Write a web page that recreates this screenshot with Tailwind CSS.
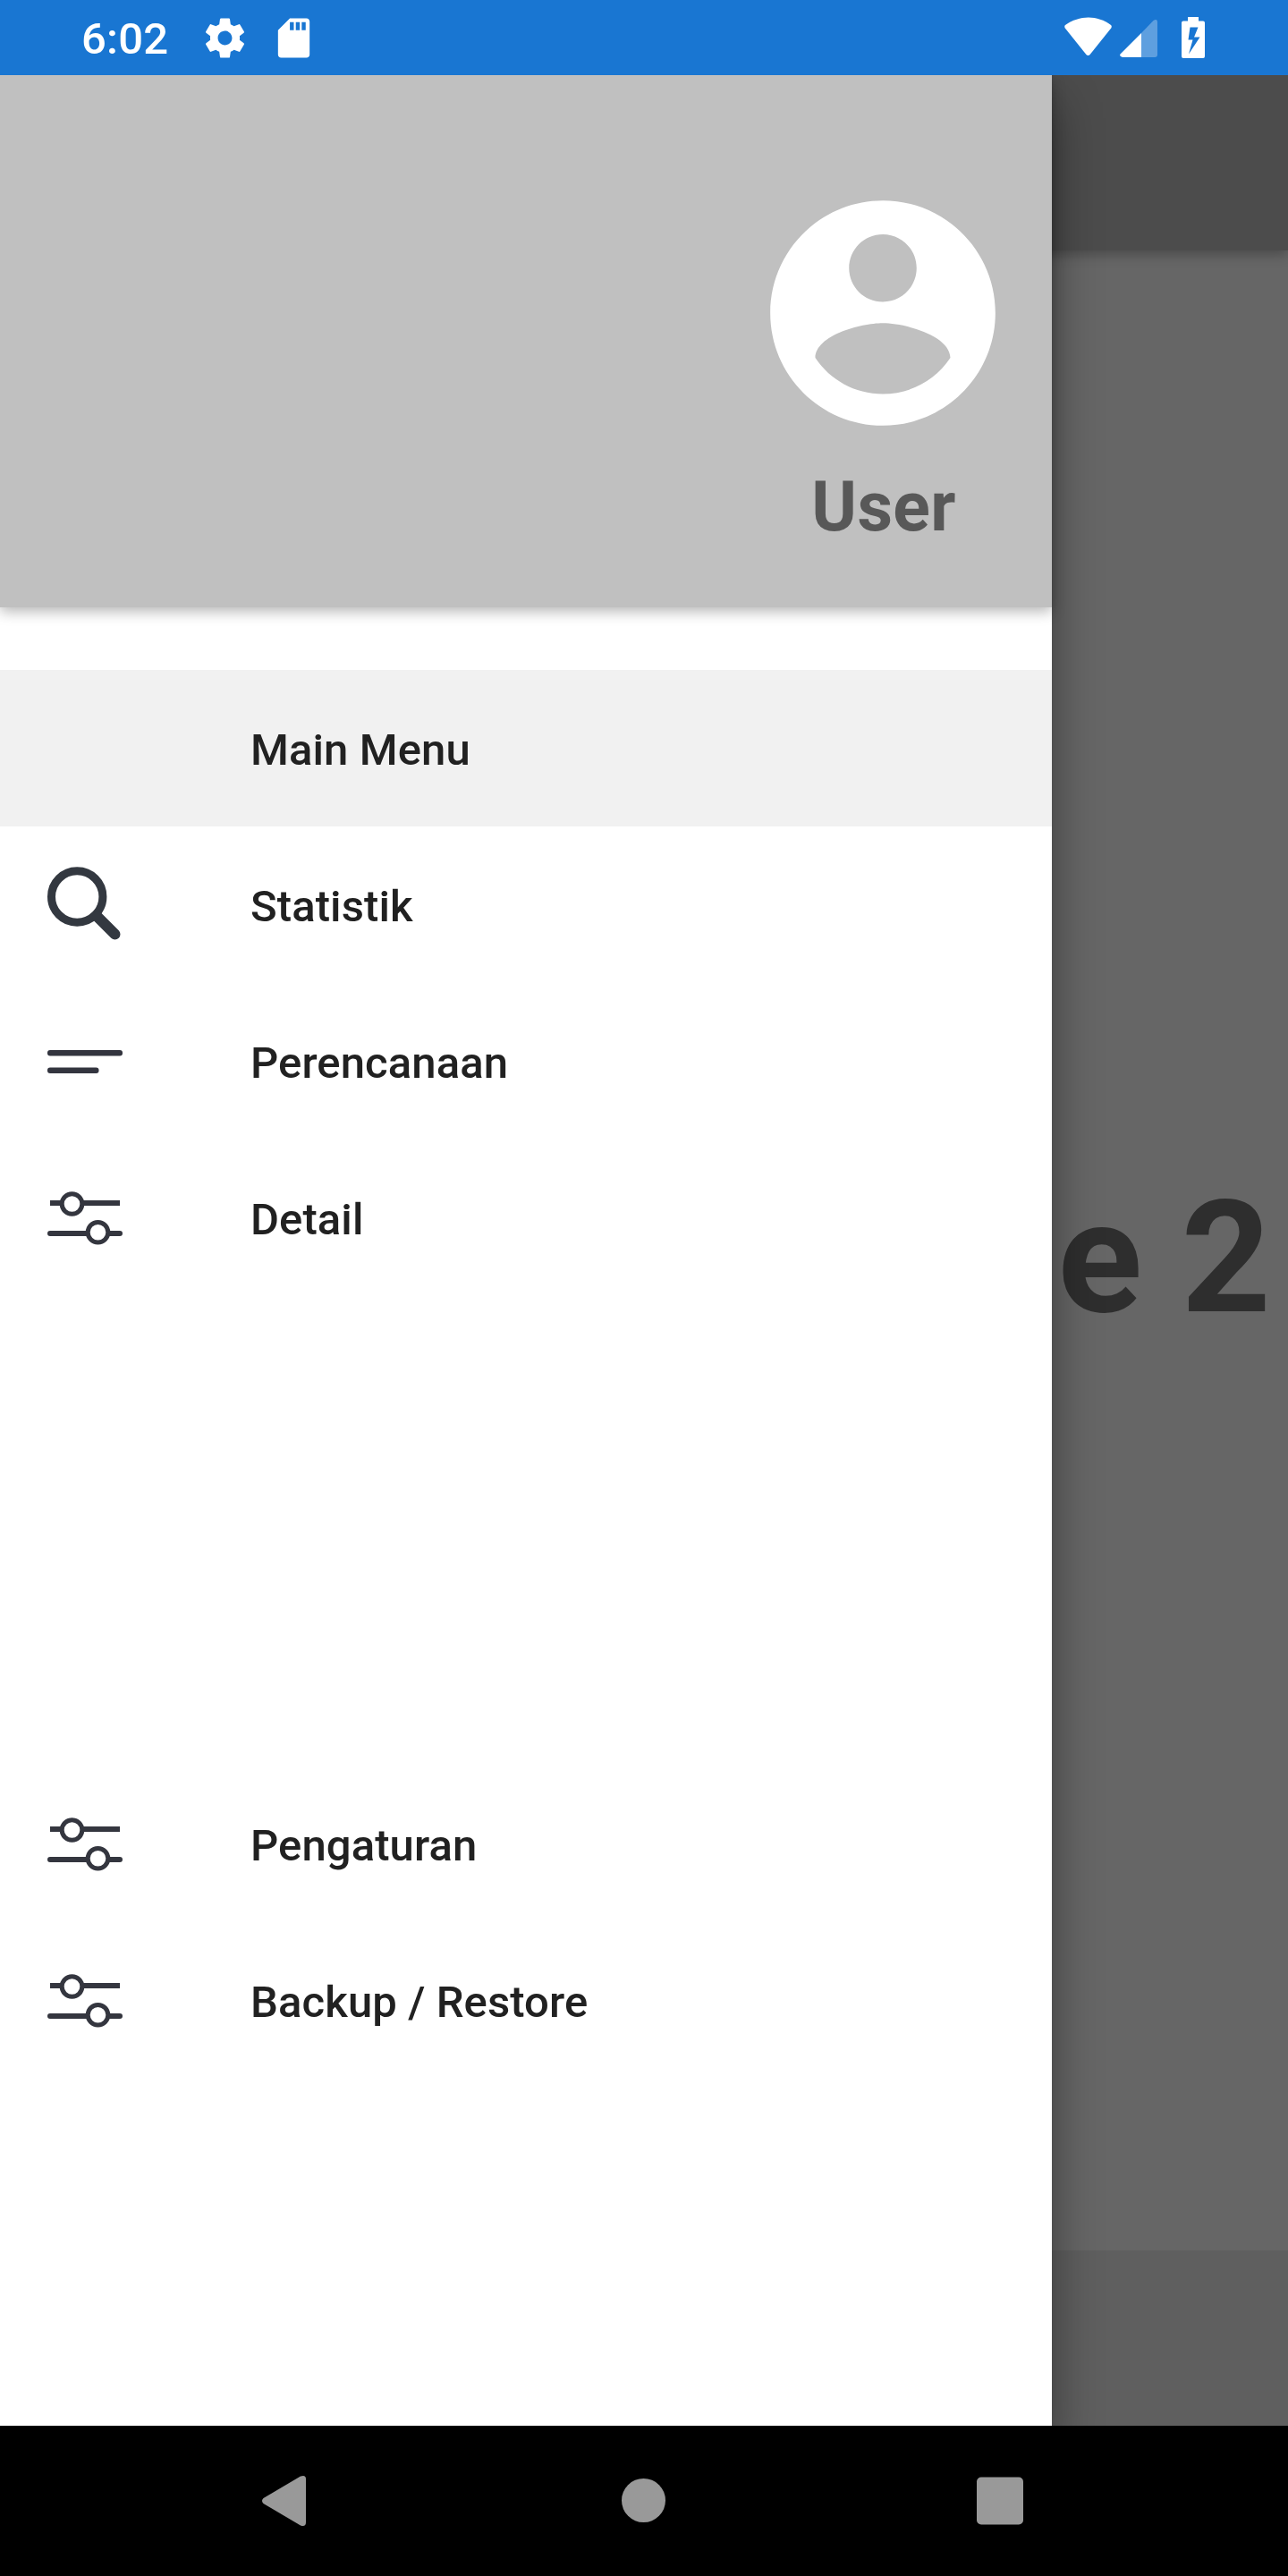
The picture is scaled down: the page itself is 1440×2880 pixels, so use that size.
<!DOCTYPE html>
<html lang="id">
<head>
<meta charset="utf-8">
<title>Main Menu</title>
<script src="https://cdn.jsdelivr.net/npm/@tailwindcss/browser@4"></script>
</head>
<body class="bg-black">
<div class="flex h-[2880px] w-[1440px] flex-col overflow-hidden font-['Roboto',sans-serif]">

  <!-- Status bar -->
  <header class="flex h-[84px] shrink-0 items-center justify-between bg-[#1976d2] pl-[91px] pr-[92px] text-white">
    <div class="flex items-center">
      <span class="w-[134px] pt-1 text-[49px] leading-[84px] font-medium tracking-[0.2px]">6:02</span>
      <svg class="h-[53px] w-[53px]" viewBox="0 0 24 24" fill="currentColor"><path d="M19.43 12.98c.04-.32.07-.64.07-.98s-.03-.66-.07-.98l2.11-1.65c.19-.15.24-.42.12-.64l-2-3.46c-.12-.22-.39-.3-.61-.22l-2.49 1c-.52-.4-1.08-.73-1.69-.98l-.38-2.65C14.46 2.18 14.25 2 14 2h-4c-.25 0-.46.18-.49.42l-.38 2.65c-.61.25-1.17.59-1.69.98l-2.49-1c-.23-.09-.49 0-.61.22l-2 3.46c-.13.22-.07.49.12.64l2.11 1.65c-.04.32-.07.65-.07.98s.03.66.07.98l-2.11 1.65c-.19.15-.24.42-.12.64l2 3.46c.12.22.39.3.61.22l2.49-1c.52.4 1.08.73 1.69.98l.38 2.65c.03.24.24.42.49.42h4c.25 0 .46-.18.49-.42l.38-2.65c.61-.25 1.17-.59 1.69-.98l2.49 1c.23.09.49 0 .61-.22l2-3.46c.12-.22.07-.49-.12-.64l-2.11-1.65zM12 15.6c-1.98 0-3.6-1.62-3.6-3.6s1.62-3.6 3.6-3.6 3.6 1.62 3.6 3.6-1.62 3.6-3.6 3.6z"/></svg>
      <svg class="ml-6 h-[53px] w-[53px]" viewBox="0 0 24 24" fill="currentColor"><path d="M18.4 2H10L4 8v12.4c0 .9.7 1.6 1.6 1.6h12.8c.9 0 1.6-.7 1.6-1.6V3.600c0-.9-.7-1.600-1.600-1.600zM12 8h-2V4h2v4zm3 0h-2V4h2v4zm3 0h-2V4h2v4z"/></svg>
    </div>
    <div class="flex items-center">
      <svg class="h-[84px] w-[158px]" viewBox="0 0 158 84" fill="currentColor">
        <path d="M1 28Q-.5 29.500 .8 31.500L24 60.500Q26.500 63.500 29 60.500L52.200 31.500Q53.500 29.500 52 28C37 16.500 17 16.500 1 28z"/>
        <path fill-opacity=".3" d="M86 37L99.500 23Q104 20.500 104 25V61Q104 64 101 64H86z"/>
        <path d="M86 37V64H65Q61 63 62.500 60.500z"/>
        <path fill-rule="evenodd" d="M138 19h12v4.500h5q2 0 2 2V63q0 2-2 2h-22q-2 0-2-2V25.500q0-2 2-2h5zM140.500 30.500l-2 14h5L139 60.500 151.500 41.500h-6.500l4.500-11z"/>
      </svg>
    </div>
  </header>

  <!-- App area: page below, drawer over it -->
  <main class="relative flex h-[2628px] shrink-0 flex-col overflow-hidden bg-[#666]">
    <div class="h-[196px] shrink-0 bg-[#4c4c4c] shadow-[0_4px_14px_rgba(0,0,0,0.3)]"></div>
    <div class="flex flex-1 justify-end pt-[1024px] pr-[19px]">
      <h1 class="text-[175px] leading-[205px] font-bold text-[#2e2e2e]">e 2</h1>
    </div>
    <div class="h-[196px] shrink-0 bg-[#5f5f5f]"></div>

    <aside class="absolute inset-y-0 left-0 flex w-[1176px] flex-col bg-white shadow-[0_30px_50px_rgba(0,0,0,0.42)]">
      <div class="relative flex h-[595px] shrink-0 flex-col items-end bg-[#c0c0c0] pt-[115px] pr-[38px] shadow-[0_5px_14px_rgba(0,0,0,0.28)]">
        <div class="flex w-[302px] flex-col items-center">
          <svg class="h-[302px] w-[302px] text-white" viewBox="0 0 24 24" fill="currentColor"><path d="M12 2C6.480 2 2 6.480 2 12s4.480 10 10 10 10-4.480 10-10S17.520 2 12 2zm0 3c1.660 0 3 1.340 3 3s-1.340 3-3 3-3-1.340-3-3 1.340-3 3-3zm0 14.200c-2.500 0-4.710-1.280-6-3.220.030-1.990 4-3.080 6-3.080 1.990 0 5.970 1.090 6 3.080-1.290 1.940-3.500 3.220-6 3.220z"/></svg>
          <p class="mt-[21px] pl-[2px] text-[77px] leading-[90px] font-bold tracking-[0.3px] text-[#585858]">User</p>
        </div>
      </div>

      <nav class="flex flex-col pt-[70px] text-[49px] font-medium tracking-[0.1px] text-[#212121]">
        <a class="flex h-[175px] items-center bg-[#f1f1f1] pl-[280px]"><span class="pt-1">Main Menu</span></a>
        <a class="flex h-[175px] items-center gap-[143px] pl-[53px]">
          <svg class="h-[85px] w-[84px]" viewBox="0 0 84 85" fill="none" stroke="#333840" stroke-linecap="round"><circle cx="33.200" cy="33.500" r="28.700" stroke-width="9"/><path d="M56 56L75.500 75.500" stroke-width="12"/></svg>
          <span class="pt-1">Statistik</span>
        </a>
        <a class="flex h-[175px] items-center gap-[143px] pl-[53px]">
          <svg class="h-[85px] w-[84px]" viewBox="0 0 84 85" fill="#33353f"><rect y="30" width="84" height="6.500" rx="3"/><rect y="49.500" width="57.500" height="6.500" rx="3"/></svg>
          <span class="pt-1">Perencanaan</span>
        </a>
        <a class="flex h-[175px] items-center gap-[143px] pl-[53px]">
          <svg class="h-[85px] w-[84px]" viewBox="0 0 84 85" fill="none" stroke="#34363f" stroke-width="5"><path d="M3 26H15M40 26H81" stroke-width="6"/><circle cx="27.500" cy="27" r="11.300"/><path d="M3 60H44M69 60H81" stroke-width="6" stroke-linecap="round"/><circle cx="56.500" cy="58.700" r="11.300"/></svg>
          <span class="pt-1">Detail</span>
        </a>
        <a class="mt-[525px] flex h-[175px] items-center gap-[143px] pl-[53px]">
          <svg class="h-[85px] w-[84px]" viewBox="0 0 84 85" fill="none" stroke="#34363f" stroke-width="5"><path d="M3 26H15M40 26H81" stroke-width="6"/><circle cx="27.500" cy="27" r="11.300"/><path d="M3 60H44M69 60H81" stroke-width="6" stroke-linecap="round"/><circle cx="56.500" cy="58.700" r="11.300"/></svg>
          <span class="pt-1">Pengaturan</span>
        </a>
        <a class="flex h-[175px] items-center gap-[143px] pl-[53px]">
          <svg class="h-[85px] w-[84px]" viewBox="0 0 84 85" fill="none" stroke="#34363f" stroke-width="5"><path d="M3 26H15M40 26H81" stroke-width="6"/><circle cx="27.500" cy="27" r="11.300"/><path d="M3 60H44M69 60H81" stroke-width="6" stroke-linecap="round"/><circle cx="56.500" cy="58.700" r="11.300"/></svg>
          <span class="pt-1">Backup / Restore</span>
        </a>
      </nav>
    </aside>
  </main>

  <!-- System navigation -->
  <footer class="flex h-[168px] shrink-0 items-center justify-center gap-[300px] bg-black text-[#999]">
    <svg class="h-[100px] w-[100px]" viewBox="0 0 100 100" fill="currentColor"><path d="M24.500 47L66 22.500Q72 20.500 72 25.500V74Q72 79.500 66 77.500L24.500 53Q21.500 50 24.500 47z"/></svg>
    <svg class="h-[100px] w-[100px]" viewBox="0 0 100 100" fill="currentColor"><circle cx="49.500" cy="49.500" r="24.500"/></svg>
    <svg class="h-[100px] w-[100px]" viewBox="0 0 100 100" fill="currentColor"><rect x="22" y="23.500" width="52" height="53" rx="5"/></svg>
  </footer>
</div>
</body>
</html>
